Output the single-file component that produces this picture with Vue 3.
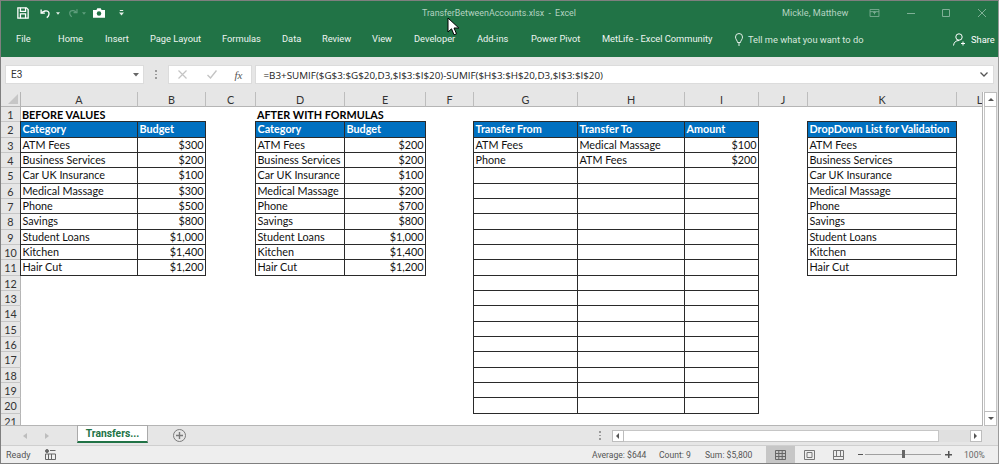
<script setup>
const colWidths = [117, 68, 50, 89, 81, 48, 104, 107, 74, 49, 149, 46]
const letters = 'ABCDEFGHIJKL'.split('')
const cats = ['ATM Fees', 'Business Services', 'Car UK Insurance', 'Medical Massage', 'Phone', 'Savings', 'Student Loans', 'Kitchen', 'Hair Cut']
const before = ['$300', '$200', '$100', '$300', '$500', '$800', '$1,000', '$1,400', '$1,200']
const after = ['$200', '$200', '$100', '$200', '$700', '$800', '$1,000', '$1,400', '$1,200']
const transfers = [['ATM Fees', 'Medical Massage', '$100'], ['Phone', 'ATM Fees', '$200']]
const gridCols = { gridTemplateColumns: `20px ${colWidths.map(w => w + 'px').join(' ')}` }

function cellOf(r, c) {
  if (r === 1 && c === 'A') return { t: 'BEFORE VALUES', cls: 'bold' }
  if (r === 1 && c === 'D') return { t: 'AFTER WITH FORMULAS', cls: 'bold' }
  if (r === 2) {
    const heads = { A: 'Category', B: 'Budget', D: 'Category', E: 'Budget', G: 'Transfer From', H: 'Transfer To', I: 'Amount', K: 'DropDown List for Validation' }
    if (heads[c]) return { t: heads[c], cls: 'boxed head' }
  }
  const i = r - 3
  if (i >= 0 && i < 9) {
    if (c === 'A' || c === 'D' || c === 'K') return { t: cats[i], cls: 'boxed' }
    if (c === 'B') return { t: before[i], cls: 'boxed num' }
    if (c === 'E') return { t: after[i], cls: 'boxed num' }
  }
  if (i >= 0 && i < 18) {
    const row = transfers[i] || ['', '', '']
    if (c === 'G') return { t: row[0], cls: 'boxed' }
    if (c === 'H') return { t: row[1], cls: 'boxed' }
    if (c === 'I') return { t: row[2], cls: 'boxed num' }
  }
  return { t: '', cls: '' }
}
const rows = Array.from({ length: 21 }, (_, k) => ({
  n: k + 1,
  cells: letters.map(c => ({ c, ...cellOf(k + 1, c) }))
}))
const tabs = [
  ['File', 16], ['Home', 58], ['Insert', 105], ['Page Layout', 150], ['Formulas', 222],
  ['Data', 282], ['Review', 322], ['View', 372], ['Developer', 414], ['Add-ins', 477],
  ['Power Pivot', 531], ['MetLife - Excel Community', 602]
]
</script>

<template>
  <div class="window">
    <header class="titlebar">
      <div class="qat">
        <svg class="ico save" width="12" height="12" viewBox="0 0 14 14" fill="none" stroke="#fff" stroke-width="1.500"><path d="M1 1h10l2 2v10H1z"/><path d="M4 1v4h6V1M4 13V8h6v5"/></svg>
        <svg class="ico undo" width="12" height="11" viewBox="0 0 16 13" fill="none" stroke="#fff" stroke-width="1.800"><path d="M1.500 1v5h5"/><path d="M2 6c2-3 7-4 9-2s1 6-2 8"/></svg>
        <svg class="caret c1" width="4" height="3" viewBox="0 0 5 3"><path d="M0 0h5L2.500 3z" fill="#e4efe8"/></svg>
        <svg class="ico redo" width="11" height="10" viewBox="0 0 16 13" fill="none" stroke="#5f9e7d" stroke-width="1.800"><path d="M14.500 1v5h-5"/><path d="M14 6c-2-3-7-4-9-2s-1 6 2 8"/></svg>
        <svg class="caret c2" width="4" height="3" viewBox="0 0 5 3"><path d="M0 0h5L2.500 3z" fill="#5f9e7d"/></svg>
        <svg class="ico cam" width="12" height="10" viewBox="0 0 14 11"><path d="M0 2h4l1-2h4l1 2h4v9H0z" fill="#fff"/><circle cx="7" cy="6" r="2.600" fill="#217346"/></svg>
        <svg class="ico cust" width="5" height="6" viewBox="0 0 6 7" fill="#e4efe8"><path d="M1 0h4v1H1zM0 3h6L3 6.500z"/></svg>
      </div>
      <div class="doc">TransferBetweenAccounts.xlsx - Excel</div>
      <div class="user">Mickle, Matthew</div>
      <div class="winbtns">
        <svg width="11" height="8" viewBox="0 0 11 9" fill="none" stroke="#7fb096"><path d="M.5.500h10v8H.500zM.5 3h10M5.500 3v3M4 4.500l1.500-1.500 1.500 1.500"/></svg>
        <svg width="8" height="9" viewBox="0 0 8 9" stroke="#7fb096"><path d="M0 4.500h8"/></svg>
        <svg width="8" height="8" viewBox="0 0 8 8" fill="none" stroke="#7fb096"><path d="M.5.500h7v7h-7z"/></svg>
        <svg width="8" height="8" viewBox="0 0 8 8" fill="none" stroke="#7fb096"><path d="M0 0l8 8M8 0L0 8"/></svg>
      </div>
    </header>

    <nav class="ribbon">
      <div class="tabs">
        <span v-for="t in tabs" :key="t[0]" class="rtab" :style="{ left: t[1] + 'px' }">{{ t[0] }}</span>
      </div>
      <div class="tell">
        <svg width="8" height="13" viewBox="0 0 8 13" fill="none" stroke="#e4efe8"><path d="M2.500 9.500C2.500 7.500.5 6.500.5 4a3.500 3.500 0 017 0c0 2.500-2 3.500-2 5.500zM3 11h2M3.500 12.500h1"/></svg>
        <span>Tell me what you want to do</span>
      </div>
      <div class="share">
        <svg width="12" height="13" viewBox="0 0 12 13" fill="none" stroke="#fff"><circle cx="6" cy="4" r="3.200"/><path d="M.5 12.500C1 9 3 7.500 6 7.500"/><path d="M8 10.500h4M10 8.500v4"/></svg>
        <span>Share</span>
      </div>
    </nav>

    <section class="fbar">
      <div class="namebox"><span>E3</span><svg width="6" height="4" viewBox="0 0 6 4"><path d="M0 0h6L3 3.500z" fill="#666"/></svg></div>
      <div class="dots"><i></i><i></i><i></i></div>
      <div class="fxbox">
        <svg width="9" height="9" viewBox="0 0 9 9" stroke="#c4c4c4" stroke-width="1.200"><path d="M.5.500l8 8M8.500.5l-8 8"/></svg>
        <svg width="10" height="9" viewBox="0 0 10 9" fill="none" stroke="#c4c4c4" stroke-width="1.400"><path d="M.5 5l3 3L9.500.5"/></svg>
        <em>fx</em>
      </div>
      <div class="formula">
        <span>=B3+SUMIF($G$3:$G$20,D3,$I$3:$I$20)-SUMIF($H$3:$H$20,D3,$I$3:$I$20)</span>
        <svg width="8" height="5" viewBox="0 0 8 5" fill="none" stroke="#555" stroke-width="1.300"><path d="M.5.500L4 4 7.500.5"/></svg>
      </div>
    </section>

    <section class="sheetwrap">
      <div class="sheet">
        <div class="grid" :style="gridCols">
          <div class="corner"><span></span></div>
          <div v-for="l in letters" :key="l" class="colhead">{{ l }}</div>
          <template v-for="row in rows" :key="row.n">
            <div class="rowhead">{{ row.n }}</div>
            <div v-for="cell in row.cells" :key="cell.c" class="cell" :class="cell.cls">{{ cell.t }}</div>
          </template>
        </div>
      </div>
      <div class="vscroll">
        <div class="arrow"><svg width="6" height="3" viewBox="0 0 6 3"><path d="M3 0l3 3H0z" fill="#555"/></svg></div>
        <div class="vtrack"></div>
        <div class="arrow"><svg width="6" height="3" viewBox="0 0 6 3"><path d="M0 0h6L3 3z" fill="#555"/></svg></div>
      </div>
    </section>

    <section class="tabbar">
      <div class="navs">
        <svg width="4" height="6" viewBox="0 0 4 6"><path d="M4 0v6L0 3z" fill="#bdbdbd"/></svg>
        <svg width="4" height="6" viewBox="0 0 4 6"><path d="M0 0v6l4-3z" fill="#bdbdbd"/></svg>
      </div>
      <div class="sheettab">Transfers...</div>
      <svg class="addsheet" width="13" height="13" viewBox="0 0 13 13" fill="none" stroke="#7a7a7a"><circle cx="6.500" cy="6.500" r="6"/><path d="M6.500 3v7M3 6.500h7" stroke-width="1.400"/></svg>
      <div class="dots small"><i></i><i></i><i></i></div>
      <div class="hscroll">
        <div class="harrow"><svg width="3" height="6" viewBox="0 0 3 6"><path d="M3 0v6L0 3z" fill="#555"/></svg></div>
        <div class="hthumb"></div>
        <div class="hrest"></div>
        <div class="harrow"><svg width="3" height="6" viewBox="0 0 3 6"><path d="M0 0v6l3-3z" fill="#555"/></svg></div>
      </div>
    </section>

    <footer class="status">
      <span class="ready">Ready</span>
      <svg class="macro" width="11" height="11" viewBox="0 0 11 11" fill="none" stroke="#666"><circle cx="2" cy="2" r="1.500" fill="#666"/><path d="M5 1.500h5.500M.5 5h10v5.500H.5zM3.500 5v5.500M6.500 5v5.500"/></svg>
      <span class="stat s1">Average: $644</span>
      <span class="stat s2">Count: 9</span>
      <span class="stat s3">Sum: $5,800</span>
      <div class="views">
        <div class="view on"><svg width="11" height="10" viewBox="0 0 11 10" fill="none" stroke="#666"><path d="M.5.500h10v9H.500zM.5 3.500h10M.5 6.500h10M3.800.5v9M7.200.5v9"/></svg></div>
        <div class="view"><svg width="11" height="10" viewBox="0 0 11 10" fill="none" stroke="#777"><path d="M.5.500h10v9H.500z"/><path d="M3 2.500h5v5H3z"/></svg></div>
        <div class="view"><svg width="11" height="10" viewBox="0 0 11 10" fill="none" stroke="#777"><path d="M.5.500h10v9H.500zM.5 6.500h10M3.500.5v6M7.500.5v6"/></svg></div>
      </div>
      <div class="zoom">
        <span class="zm"></span>
        <div class="slider"><span class="knob"></span></div>
        <span class="zp"></span>
      </div>
      <span class="pct">100%</span>
    </footer>

    <svg class="cursor" width="13" height="19" viewBox="0 0 13 19"><path d="M1 1v14l3.500-3.200 2.500 6 2.500-1-2.500-5.800h4.800z" fill="#fff" stroke="#000"/></svg>
  </div>
</template>

<style>
html, body { margin: 0; background: #e6e6e6; }
</style>

<style scoped>
.window {
  position: relative;
  width: 999px;
  height: 464px;
  box-sizing: border-box;
  overflow: hidden;
  display: flex;
  flex-direction: column;
  border: 1px solid #7f7f7f;
  border-right-color: #9a9a9a;
  font-family: Roboto, "Open Sans", sans-serif;
  background: #e6e6e6;
}
.titlebar {
  height: 27px;
  flex: none;
  background: #217346;
  display: flex;
  align-items: center;
  color: #b4d2c1;
  font-size: 9.150px;
  padding-bottom: 3px;
  box-sizing: border-box;
  position: relative;
}
.qat { display: flex; align-items: center; width: 421px; padding-left: 16px; box-sizing: border-box; flex: none; }
.ico, .caret { flex: none; }
.undo { margin-left: 11px; }
.c1 { margin-left: 4px; }
.redo { margin-left: 7px; }
.c2 { margin-left: 4px; }
.cam { margin-left: 7px; }
.cust { margin-left: 14px; }
.doc { width: 360px; flex: none; white-space: nowrap; font-size: 8.900px; word-spacing: 2px; }
.user { width: 87px; flex: none; white-space: nowrap; }
.winbtns { display: flex; align-items: center; }
.winbtns svg { flex: none; }
.winbtns svg:nth-child(2) { margin-left: 27px; }
.winbtns svg:nth-child(3) { margin-left: 27px; }
.winbtns svg:nth-child(4) { margin-left: 28px; }
.ribbon {
  height: 29px;
  flex: none;
  background: #217346;
  color: #eef5f1;
  font-size: 9.300px;
  display: flex;
  align-items: center;
  padding-bottom: 6px;
  box-sizing: border-box;
  position: relative;
}
.tabs { width: 734px; height: 23px; position: relative; flex: none; }
.rtab { position: absolute; top: 4px; white-space: nowrap; line-height: 14px; margin-left: -1px; }
.tell { display: flex; align-items: center; gap: 5px; width: 218px; flex: none; color: #d8e8de; white-space: nowrap; }
.share { display: flex; align-items: center; gap: 6px; color: #fff; }
.fbar {
  height: 35px;
  flex: none;
  display: flex;
  align-items: center;
  padding-left: 4px;
  background: #e6e6e6;
  font-size: 10px;
  color: #333;
  box-sizing: border-box;
}
.namebox, .fxbox, .formula {
  background: #fff;
  height: 19px;
  display: flex;
  align-items: center;
  box-sizing: border-box;
  border: 1px solid #dcdcdc;
  flex: none;
}
.namebox { width: 139px; justify-content: space-between; padding: 0 4px 0 5px; }
.dots { display: flex; flex-direction: column; gap: 2px; margin: 0 11px; flex: none; }
.dots i { display: block; width: 1.500px; height: 1.500px; background: #9a9a9a; }
.fxbox { width: 84px; gap: 20px; padding-left: 9px; margin-right: 3px; }
.fxbox em { font-family: "Liberation Serif", serif; font-size: 11px; color: #555; margin-left: -2px; }
.formula { width: 739px; justify-content: space-between; padding: 0 5px 0 8px; color: #222; white-space: nowrap; font-family: "Open Sans", sans-serif; font-size: 9.830px; }
.sheetwrap { height: 334px; flex: none; display: flex; background: #fff; overflow: hidden; }
.sheet { width: 982px; flex: none; overflow: hidden; border-right: 1px solid #b5b5b5; box-sizing: border-box; border-bottom: 1px solid #b5b5b5; }
.grid {
  display: grid;
  grid-template-rows: 15px;
  grid-auto-rows: 15.330px;
  font-family: Lato, "Liberation Sans", sans-serif;
  font-size: 10.800px;
  color: #111;
}
.corner { background: #e6e6e6; border-right: 1px solid #b5b5b5; border-bottom: 1px solid #b5b5b5; position: relative; box-sizing: border-box; }
.corner span { position: absolute; right: 2px; bottom: 2px; border-left: 10px solid transparent; border-bottom: 10px solid #c6c6c6; }
.colhead {
  background: #e6e6e6;
  border-right: 1px solid #bdbdbd;
  border-bottom: 1px solid #b5b5b5;
  text-align: center;
  line-height: 15px;
  color: #333;
  box-sizing: border-box;
  overflow: hidden;
}
.rowhead {
  background: #e6e6e6;
  border-right: 1px solid #b5b5b5;
  border-bottom: 1px solid #c6c6c6;
  text-align: center;
  line-height: 15px;
  color: #333;
  box-sizing: border-box;
  overflow: hidden;
}
.cell {
  padding: 0 1px;
  line-height: 15.500px;
  white-space: nowrap;
  min-width: 0;
  box-sizing: border-box;
}
.bold { font-weight: 700; color: #000; position: relative; z-index: 1; }
.boxed { border: 1px solid #2a2a2a; margin: -1px 0 0 -1px; line-height: 14px; padding: 0 1.500px 0 1.500px; }
.head { background: #0070c0; color: #fff; font-weight: 700; }
.num { text-align: right; }
.vscroll { width: 15px; flex: none; margin-left: 1px; display: flex; flex-direction: column; background: #e6e6e6; }
.arrow { height: 15px; width: 13px; flex: none; background: #fff; border: 1px solid #bdbdbd; box-sizing: border-box; display: flex; align-items: center; justify-content: center; }
.vtrack { flex: 1; width: 13px; background: #fff; border-left: 1px solid #c6c6c6; border-right: 1px solid #c6c6c6; box-sizing: border-box; }
.tabbar {
  height: 20px;
  flex: none;
  position: relative;
  display: flex;
  align-items: center;
  background: #e6e6e6;
  border-bottom: 1px solid #cfcfcf;
  box-sizing: border-box;
}
.navs { width: 76px; flex: none; display: flex; gap: 18px; padding-left: 22px; box-sizing: border-box; }
.sheettab {
  width: 69px;
  height: 15px;
  flex: none;
  align-self: flex-start;
  margin-top: -1px;
  background: #fff;
  border: 1px solid #aaa;
  border-bottom: 2px solid #217346;
  text-align: center;
  line-height: 16px;
  color: #217346;
  font-weight: 700;
  font-size: 10.300px;
}
.addsheet { margin-left: 25px; flex: none; }
.dots.small { margin: 0 0 0 413px; }
.hscroll { width: 370px; height: 12px; margin-left: 11px; display: flex; flex: none; background: #e0e0e0; }
.harrow { width: 12px; flex: none; background: #fff; border: 1px solid #bdbdbd; box-sizing: border-box; display: flex; align-items: center; justify-content: center; }
.hthumb { width: 315px; flex: none; background: #fff; border: 1px solid #c6c6c6; border-left: none; box-sizing: border-box; }
.hrest { flex: 1; }
.status {
  flex: 1;
  min-height: 0;
  display: flex;
  align-items: center;
  font-size: 8.600px;
  color: #555;
  background: #eeeeee;
  position: relative;
}
.ready { margin-left: 5px; width: 39px; flex: none; font-size: 9px; }
.macro { flex: none; }
.stat { white-space: nowrap; flex: none; }
.s1 { margin-left: 536px; width: 67px; }
.s2 { width: 46px; }
.s3 { width: 61px; }
.views { display: flex; height: 100%; flex: none; }
.view { width: 29px; display: flex; align-items: center; justify-content: center; }
.view.on { background: #c6c6c6; }
.zoom { display: flex; align-items: center; margin-left: 5px; flex: none; }
.zm { width: 5px; height: 1.500px; background: #555; margin-right: 2px; }
.slider { width: 76px; height: 1px; background: #a0a0a0; position: relative; }
.knob { position: absolute; left: 37px; top: -4px; width: 3px; height: 8px; background: #666; }
.zp { width: 7px; height: 7px; margin-left: 4px; background: linear-gradient(#555,#555) center/7px 1.500px no-repeat, linear-gradient(#555,#555) center/1.500px 7px no-repeat; }
.pct { margin-left: 12px; flex: none; color: #666; }
.cursor { position: absolute; left: 446px; top: 16px; }
</style>
